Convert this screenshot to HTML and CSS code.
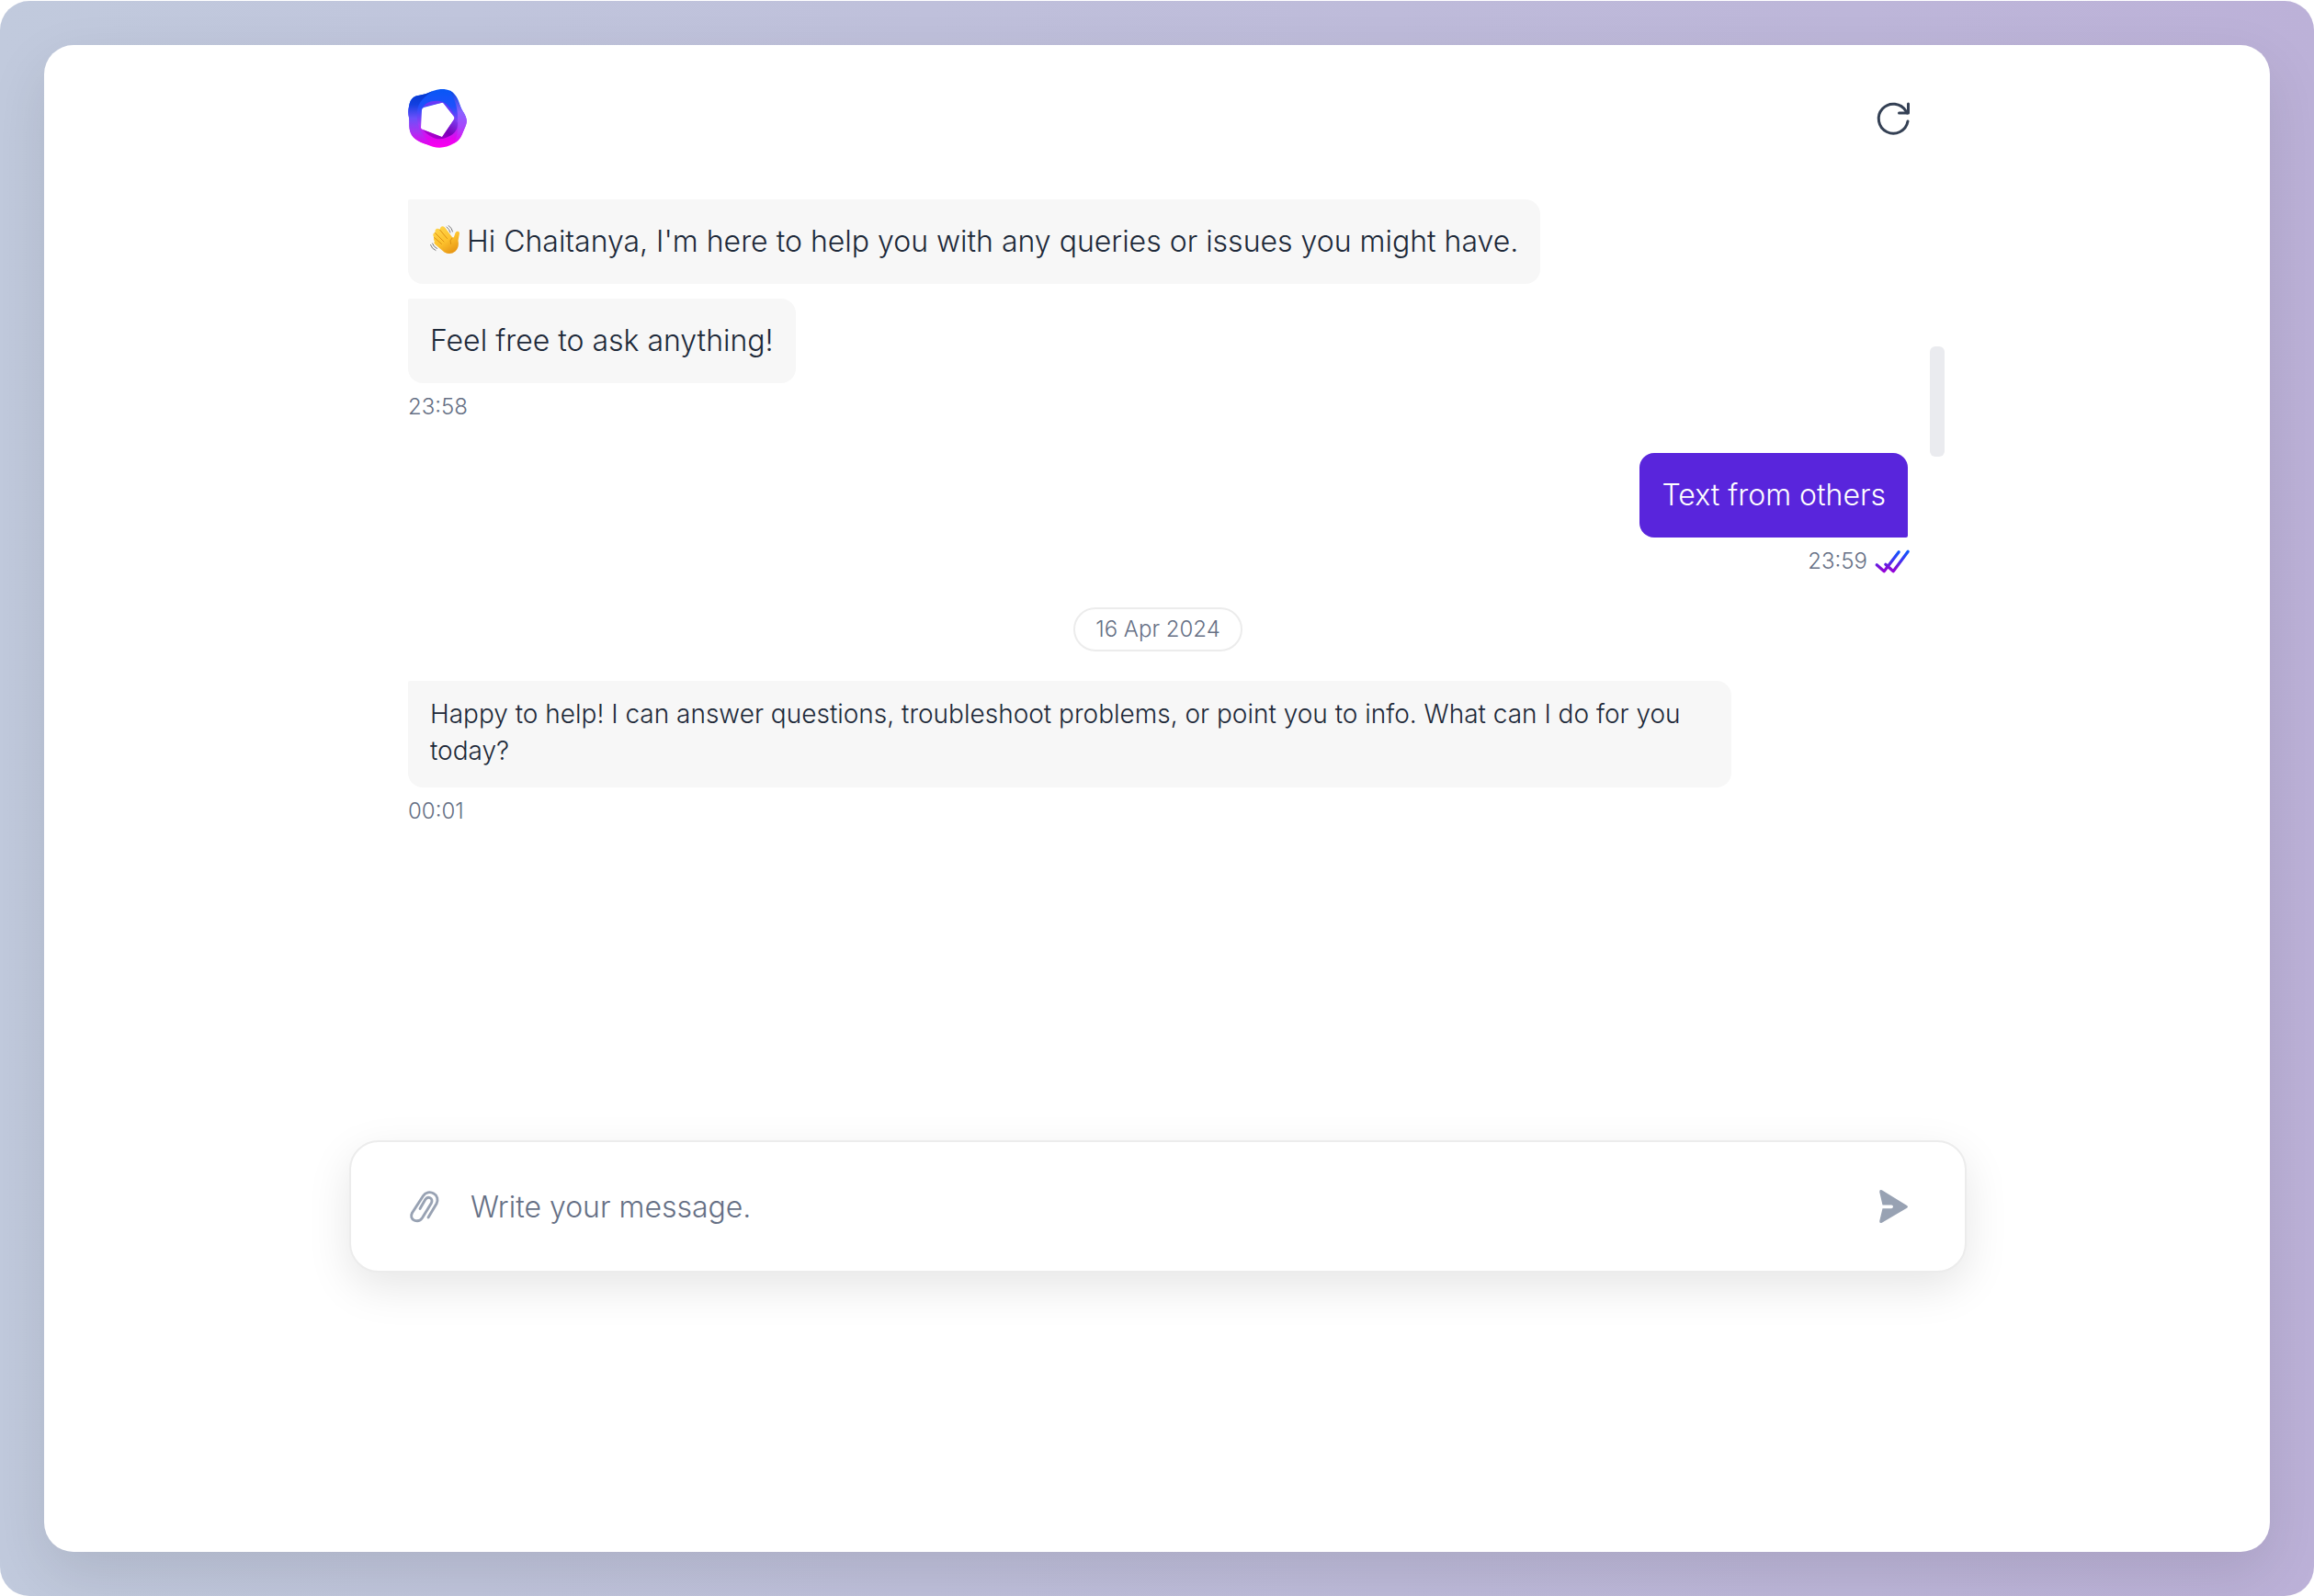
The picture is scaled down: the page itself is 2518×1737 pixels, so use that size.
FILE: index.html
```html
<!DOCTYPE html>
<html lang="en">
<head>
  <meta charset="UTF-8">
  <title>Chat</title>
  <link rel="stylesheet" href="styles.css">
</head>
<body>
  <div class="frame">
    <main class="card">
      <div class="chat">
        <header class="header">
          <svg class="logo" viewBox="0 0 64 64" role="img" aria-label="Logo">
            <defs>
              <linearGradient id="ring" x1="0" y1="0" x2="0" y2="1">
                <stop offset="0" stop-color="#0757f5"/>
                <stop offset="0.3" stop-color="#1f50fb"/>
                <stop offset="0.6" stop-color="#9a3cf6"/>
                <stop offset="0.85" stop-color="#e503ee"/>
                <stop offset="1" stop-color="#fb00f0"/>
              </linearGradient>
              <linearGradient id="left" x1="0" y1="0" x2="0" y2="1">
                <stop offset="0" stop-color="#0036cc"/>
                <stop offset="0.25" stop-color="#1240e0"/>
                <stop offset="0.5" stop-color="#6a50fa"/>
                <stop offset="0.75" stop-color="#a634f2"/>
                <stop offset="1" stop-color="#e800ee"/>
              </linearGradient>
              <linearGradient id="right" x1="0" y1="0" x2="0" y2="1">
                <stop offset="0" stop-color="#0645dd"/>
                <stop offset="0.4" stop-color="#8a62ff"/>
                <stop offset="0.7" stop-color="#a945fb"/>
                <stop offset="1" stop-color="#ee00f2"/>
              </linearGradient>
              <linearGradient id="fold" x1="0" y1="1" x2="1" y2="0">
                <stop offset="0" stop-color="#c800d6"/>
                <stop offset="0.5" stop-color="#7a00b8"/>
                <stop offset="1" stop-color="#7c4dff"/>
              </linearGradient>
            </defs>
            <path fill="url(#ring)" fill-rule="evenodd" d="M1 19C2 13 4 8 11 7C18 6 22 4 27 2C37-2 47 0 51 6C56 12 56 18 59 23C65 32 65 36 61 44C58 51 57 55 50 59C40 65 30 65 20 60C13 57 8 56 4 50C0 43 2 37 1 31C0 27 0 23 1 19ZM17 20Q15 21 15 23L14 42Q14 43 16 44L36 52Q37 53 38 51L50 33Q51 32 50 30L39 16Q38 14 36 15Z"/>
            <path fill="url(#left)" d="M1 19C2 13 4 8 11 7C18 6 22 4 27 2C18 8 11 14 10 24C9 34 11 42 16 49C19 54 23 55 25 61C17 60 8 56 4 50C0 43 2 37 1 31C0 27 0 23 1 19Z"/>
            <path fill="url(#right)" d="M46 2C53 6 55 16 59 23C65 32 65 36 61 44C58 51 57 55 50 59C54 51 55 42 54 34C54 26 54 17 46 2Z"/>
            <path fill="url(#fold)" d="M37 52L50 33Q51 31 50 29L54 37C54 46 49 50 41 53C33 56 25 54 16 44Z"/>
            <path fill="#8a2df5" opacity="0.7" d="M15 22Q15 20 18 19L36 15Q38 14 40 17L51 31C47 21 42 14 34 13C25 12 18 15 15 22Z"/>
          </svg>
          <button class="icon-btn" type="button" aria-label="Restart chat">
            <svg class="icon" viewBox="0 0 36 36" fill="none" stroke="#344054" stroke-width="3" stroke-linecap="round" stroke-linejoin="round">
              <path d="M36 21A16 16 0 1 1 34 10L35.500 12"/>
              <path d="M36.500 2V12H26.500"/>
            </svg>
          </button>
        </header>

        <div class="messages">
          <div class="group">
            <p class="bubble">
              <svg class="wave" viewBox="0 0 32 32" role="img" aria-label="Waving hand">
                <defs>
                  <linearGradient id="skin" x1="0" y1="0" x2="0.6" y2="1">
                    <stop offset="0" stop-color="#ffd84f"/>
                    <stop offset="0.6" stop-color="#fdc22d"/>
                    <stop offset="1" stop-color="#e99a17"/>
                  </linearGradient>
                </defs>
                <path fill="url(#skin)" d="M12.500 1.500Q14.500 .500 16.500 3L24 13Q25.500 14.500 26.300 12L27.500 8.500Q28.500 6 31 7Q32.500 8 31.700 10.500L30.500 17Q32 24 27.500 28.500Q22 33 15.500 29.500L5.500 21Q3.500 19 5 17.500Q3 15.500 4.500 13.500Q2.500 11 3.800 9Q4.800 8 5.500 8Q5 5 7 4Q8.500 3.300 10.500 5Q11 2.200 12.500 1.500Z"/>
                <path fill="none" stroke="#d88a10" stroke-width="0.900" stroke-linecap="round" d="M10.500 5L18.500 14.500M5.500 8.500L15 18M4.500 13.500L12.500 20.500M24 14Q20.500 16.500 22.500 20.500"/>
                <path fill="none" stroke="#777" stroke-width="1" stroke-linecap="round" d="M18 2Q21 4 22 8M20 .500Q24 3 24.500 7M.500 21.500Q2 26 6 27.500M2.500 20Q4 24 7.500 25.500"/>
              </svg>Hi Chaitanya, I'm here to help you with any queries or issues you might have.
            </p>
            <p class="bubble">Feel free to ask anything!</p>
            <time class="time">23:58</time>
          </div>

          <div class="group group-sent">
            <p class="bubble bubble-sent">Text from others</p>
            <div class="status">
              <time class="time">23:59</time>
              <svg class="icon" viewBox="0 0 36 36" role="img" aria-label="Read">
                <defs>
                  <linearGradient id="tick" gradientUnits="userSpaceOnUse" x1="0" y1="6" x2="0" y2="30">
                    <stop offset="0" stop-color="#0a5cff"/>
                    <stop offset="0.45" stop-color="#3d35f2"/>
                    <stop offset="0.75" stop-color="#7a12d8"/>
                    <stop offset="1" stop-color="#9a00d8"/>
                  </linearGradient>
                </defs>
                <path fill="none" stroke="url(#tick)" stroke-width="3.200" stroke-linecap="round" stroke-linejoin="round" d="M2.200 21.700L10.200 28.700L26.200 7.700M11.800 21.300L20.200 28.700L36.200 7.300"/>
              </svg>
            </div>
          </div>

          <time class="date">16 Apr 2024</time>

          <div class="group">
            <p class="bubble bubble-long">Happy to help! I can answer questions, troubleshoot problems, or point you to info. What can I do for you today?</p>
            <time class="time">00:01</time>
          </div>

          <div class="scrollbar"></div>
        </div>
      </div>

      <form class="composer">
        <button class="icon-btn" type="button" aria-label="Attach file">
          <svg class="icon" viewBox="0 0 36 36" fill="none" stroke="#98a2b3" stroke-width="2.900" stroke-linecap="round">
            <path d="M22 30L31 15C33 11 32 6 28 4C24 1.500 19 2.500 16.500 6.500L4.500 25C2.500 28.500 4 32 6.500 33C10 34.500 13.500 33.500 15.500 30.500L25.300 14.500C26.600 12 26 9.700 24 8.700C22 7.700 20 8.500 18.800 10.500L13 20.500"/>
          </svg>
        </button>
        <input class="composer-input" type="text" placeholder="Write your message." aria-label="Message">
        <button class="icon-btn" type="submit" aria-label="Send">
          <svg class="icon" viewBox="0 0 36 36">
            <path fill="#98a2b3" d="M5.200 2.200Q5 -.700 7.800 .300L35 17Q37 18.300 35 19.700L7.800 35.700Q5 36.800 5.200 34L8.500 20.200H18.200Q20 20 20 18.300Q20 16.500 18.200 16.400H8.500Z"/>
          </svg>
        </button>
      </form>
    </main>
  </div>
</body>
</html>
```
FILE: styles.css
```css
* {
  box-sizing: border-box;
}

body {
  margin: 0;
  padding-top: 1px;
  background: white;
  font-family: Inter, "Liberation Sans", sans-serif;
  font-weight: 350;
  color: #1d2939;
}

p {
  margin: 0;
}

.frame {
  display: flex;
  min-height: calc(100vh - 1px);
  padding: 48px;
  border-radius: 32px;
  background: linear-gradient(to right, #c1cadd, #bcb1d8);
}

.card {
  flex: 1;
  display: flex;
  flex-direction: column;
  align-items: center;
  padding: 48px 32px 304px 34px;
  border-radius: 32px;
  background: white;
  box-shadow: 0 24px 64px rgba(0, 0, 0, 0.1);
}

.chat {
  flex: 1;
  width: 100%;
  max-width: 1632px;
}

.header {
  display: flex;
  justify-content: space-between;
  align-items: center;
  margin-bottom: 56px;
}

.logo {
  display: block;
  width: 64px;
  height: 64px;
}

.icon {
  display: block;
  width: 36px;
  height: 36px;
  overflow: visible;
}

.icon-btn {
  flex: none;
  padding: 0;
  border: none;
  background: none;
  cursor: pointer;
}

.messages {
  position: relative;
  display: flex;
  flex-direction: column;
  gap: 32px;
}

.group {
  display: flex;
  flex-direction: column;
  align-items: flex-start;
}

.group-sent {
  align-items: flex-end;
}

.bubble {
  padding: 24px;
  border-radius: 2px 16px 16px 16px;
  background: #f7f7f7;
  font-size: 32px;
  line-height: 44px;
}

.bubble + .bubble {
  margin-top: 16px;
}

.bubble-sent {
  border-radius: 16px 16px 2px 16px;
  background: #5925dc;
  color: white;
}

.bubble-long {
  max-width: 1440px;
  padding: 16px 24px 20px;
  font-size: 28px;
  line-height: 40px;
}

.wave {
  width: 32px;
  height: 32px;
  margin-right: 8px;
  vertical-align: -3px;
}

.time,
.date {
  color: #667085;
  font-size: 24px;
  line-height: 36px;
}

.group > .time,
.status {
  margin-top: 8px;
}

.status {
  display: flex;
  gap: 8px;
}

.date {
  align-self: center;
  padding: 4px 22px;
  border: 2px solid #ececec;
  border-radius: 24px;
}

.scrollbar {
  position: absolute;
  top: 160px;
  right: -40px;
  width: 16px;
  height: 120px;
  border-radius: 6px;
  background: #eaebef;
}

.composer {
  display: flex;
  align-items: center;
  gap: 32px;
  width: 100%;
  max-width: 1760px;
  padding: 48px 62px;
  border: 2px solid #ececec;
  border-radius: 32px;
  background: white;
  box-shadow: 0 16px 48px rgba(0, 0, 0, 0.1);
}

.composer-input {
  flex: 1;
  min-width: 0;
  height: 44px;
  padding: 0;
  border: none;
  outline: none;
  background: none;
  color: #1d2939;
  font-family: inherit;
  font-size: 32px;
  font-weight: inherit;
}

.composer-input::placeholder {
  color: #667085;
}
```
